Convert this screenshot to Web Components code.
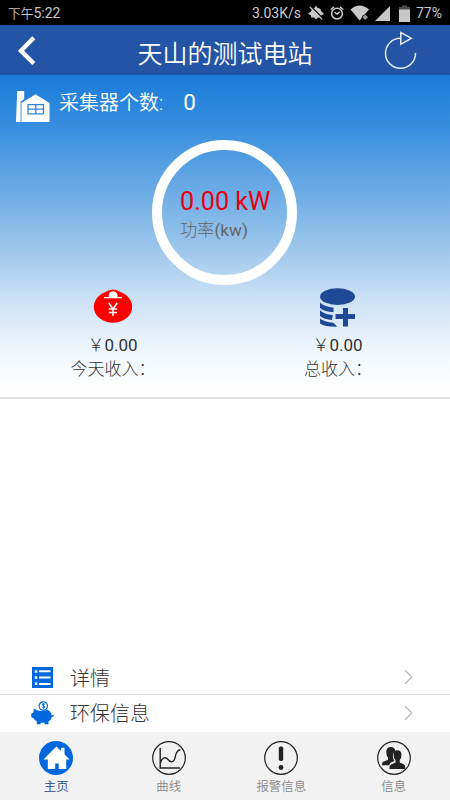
<!DOCTYPE html>
<html lang="zh-CN">
<head>
<meta charset="utf-8">
<title>天山的测试电站</title>
<style>
    body {
        margin: 0;
        width: 450px;
        height: 800px;
        overflow: hidden;
        background: #fff;
        font-family: Roboto, "Noto Sans CJK SC", sans-serif;
    }
</style>
</head>
<body>
<station-app>
    <status-bar slot="top" period="下午" time="5:22" speed="3.03K/s" battery="77%"></status-bar>
    <title-bar slot="top">天山的测试电站</title-bar>
    <station-summary slot="summary">
        <span slot="label">采集器个数:</span>
        <span slot="count">0</span>
        <power-ring value="0.00 kW" unit="(kw)">功率</power-ring>
        <income-item slot="income" icon="purse" value="0.00">今天收入：</income-item>
        <income-item slot="income" icon="coins" value="0.00">总收入：</income-item>
    </station-summary>
    <menu-row icon="list">详情</menu-row>
    <menu-row icon="piggy">环保信息</menu-row>
    <tab-bar slot="bottom">
        <tab-item icon="home" active>主页</tab-item>
        <tab-item icon="curve">曲线</tab-item>
        <tab-item icon="alarm">报警信息</tab-item>
        <tab-item icon="people">信息</tab-item>
    </tab-bar>
</station-app>

<script>
const ICONS = {
    mute: [16, 16, `
        <path fill="#c8c8c8" d="M4 4 6.500 2.800 8 .8l1.500 2L12.500 4l.5 2.300L15.500 8v1.200L13 10.800 12.500 12.500H9.800L8 14.500l-1.700-2H3.200L3 10.500.5 9V8L3 6.500z"/>
        <path stroke="#000" stroke-width="1.300" d="m3 1.500 12 12"/>
        <path stroke="#c8c8c8" stroke-width="1.300" d="m1.800 2 12.400 12.400"/>`],
    clock: [14, 14, `
        <g fill="none" stroke="#c8c8c8" stroke-width="1.6">
            <circle cx="7" cy="7.6" r="5.4"/>
            <path d="M.8 3.5 4 .9M13.2 3.5 10 .9M4.5 6 7 8l2.700-2.200"/>
        </g>`],
    wifi: [20, 16, `
        <path fill="#c8c8c8" d="M.5 4.6Q9.5-3.4 19 4.6l-4.3 5-2 1-1.6 3.1-1.4 1.8z"/>
        <path fill="#999" d="m15.2 9.5 2.8 2.8-2.8 2.8-2.8-2.8z"/>`],
    signal: [15, 15, `<path fill="#c8c8c8" d="M15 0v15H0z"/>`],
    battery: [11, 17, `
        <path fill="#4a4a4a" d="M3 .5h5V2h3v3H0V2h3z"/>
        <path fill="#c8c8c8" d="M0 4.5h11V17H0z"/>`],
    back: [18, 30, `<path fill="none" stroke="#fff" stroke-width="4.4" d="M15.8 1.7 3 14.8l12.8 12.7"/>`],
    refresh: [34, 40, `
        <g fill="none" stroke="#e4ecf8" stroke-width="1.5">
            <path d="M16.5 7.3A15 15 0 1 0 31.5 22"/>
            <path d="M16.8 1.5v11.8l10.5-6.1z"/>
        </g>`],
    factory: [34, 32, `
        <path fill="#fff" d="M1.2 0h7v8.2L4.6 10.5V31H0z"/>
        <path fill="#fff" d="M5.500 12 19.5 3.300 33.500 12v19h-28z"/>
        <path fill="none" stroke="#2c85d8" stroke-width="1.3" d="M12 13.6h15.5v9.2H12zM19.8 13.6v9.2M12 18.2h15.5"/>`],
    purse: [40, 36, `
        <ellipse cx="20" cy="18.8" rx="19.2" ry="16"/>
        <path d="M12 4.5Q20-1.500 28 4.500z"/>
        <path fill="#fff" d="M11 10.300V9h4.800a4.500 4.500 0 1 1 8.600 0H29v1.300z"/>
        <path fill="none" stroke="#fff" stroke-width="1.500" d="m15.800 15 4.200 6 4.200-6M20 21v7M15.800 21h8.400M15.800 24.400h8.400"/>`],
    coins: [36, 40, `
        <ellipse cx="17.5" cy="8.600" rx="17.500" ry="8.400"/>
        <path d="M0 14.500q4 4.200 13.500 5v4.700Q4.500 23.700 0 20zM0 22.300q4 4 12.800 4.700L12 32Q4 31.500 0 28zM0 30.500Q4 34 13.500 34.800l3.800 3.900Q5 39 0 35.500z"/>
        <path d="M23 20h5v6h7v5h-7v7.500h-5V31h-7.500v-5H23z"/>`],
    list: [21, 21, `
        <path d="M0 0h21v21H0z"/>
        <path fill="#fff" d="M2.800 3.300h2.500v2.500H2.800zM7 3.300h11.500v2H7zM2.800 9.300h2.500v2.500H2.800zM7 9.500h11.500v2H7zM2.800 15.500h2.500V18H2.800zM7 16h11.500v2H7z"/>`],
    piggy: [24, 24, `
        <circle cx="12.300" cy="5" r="4.200" fill="none" stroke="#0068dc" stroke-width="1.200"/>
        <path fill="none" stroke="#0068dc" d="M14 3.500c-1-1-3.300-.8-3 .4.300 1.200 3 .9 3 2.100 0 1.200-2.300 1.100-3.200.2M12.400 2.300v5.400"/>
        <path d="M2.500 7.500 6 9.200q6 2 10-.8 4 1.400 4.800 6l1.800-.7.300 1.200-2.200 1.300q-.7 3-3.200 4.400v2.600h-3.600l-.6-1.400H10l-.7 1.400H5.800v-3Q3 18.700 2.300 17L.6 16.600 0 13l2.200-1.200q.8-2 .3-4.300z"/>`],
    next: [9, 16, `<path fill="none" stroke="#bbbec1" stroke-width="1.400" d="m1 1.300 6.800 6.700L1 14.700"/>`],
    home: [34, 34, `
        <circle cx="17" cy="17" r="17"/>
        <path fill="#fff" d="M17.300 5.500 22 10V6.700h3.500v6.500l5 5.200h-3.300V28h-7.500v-5.500h-3.500V28H8.800v-9.600H4.500z"/>`],
    curve: [34, 34, `
        <circle cx="17" cy="17" r="16.300" fill="none" stroke="#222" stroke-width="1.200"/>
        <path fill="none" stroke="#222" stroke-width="1.400" d="M8.200 7v20h19.600M8.400 22c1.500-5 4.500-6.500 7-4 2 2.500 4 3.500 6 2s1.500-5 3-8 2.500-3.200 4-3.300"/>`],
    alarm: [34, 34, `
        <circle cx="17" cy="17" r="16.300" fill="none" stroke="#222" stroke-width="1.200"/>
        <rect x="14.800" y="5.500" width="4.400" height="14.500" rx="1.800"/>
        <circle cx="17" cy="26.500" r="2.400"/>`],
    people: [34, 34, `
        <circle cx="17" cy="17" r="16.300" fill="none" stroke="#222" stroke-width="1.200"/>
        <path d="M5 24.300v-1.800q.3-1.600 2.500-2.200l3.500-1.500v-2.300q-1.600-1.500-1.600-4.500C8.800 8.500 10.500 6 13.800 6c3 0 4.700 2 4.500 4.500q-2.800 1.500-2.500 4.500.2 3 1.700 5l-3.500 1.500q-1.500.8-1.700 2.800z"/>
        <path d="M12.500 28v-2.500q.3-1.800 2.500-2.500l3.500-1.400V19q-2-2-2-5 0-4.800 4-4.800t4 4.800q0 3-1.800 5v2.600l3.500 1.400q2 .8 2 2.500V28z"/>`]
};

class AppIcon extends HTMLElement {
    constructor() {
        super();
        this.attachShadow({ mode: 'open' });
    }

    connectedCallback() {
        const [width, height, shapes] = ICONS[this.getAttribute('name')];
        this.shadowRoot.innerHTML = `
            <style>
                :host {
                    display: block;
                    flex: none;
                }

                svg {
                    display: block;
                    fill: currentColor;
                }
            </style>
            <svg width="${width}" height="${height}" viewBox="0 0 ${width} ${height}">${shapes}</svg>
        `;
    }
}

class StationApp extends HTMLElement {
    constructor() {
        super();
        this.attachShadow({ mode: 'open' });
        this.shadowRoot.innerHTML = `
            <style>
                :host {
                    display: flex;
                    flex-direction: column;
                    height: 800px;
                }

                #space {
                    flex: 1;
                }
            </style>
            <slot name="top"></slot>
            <slot name="summary"></slot>
            <div id="space"></div>
            <slot></slot>
            <slot name="bottom"></slot>
        `;
    }
}

class StatusBar extends HTMLElement {
    constructor() {
        super();
        this.attachShadow({ mode: 'open' });
    }

    connectedCallback() {
        this.shadowRoot.innerHTML = `
            <style>
                :host {
                    display: flex;
                    align-items: center;
                    box-sizing: border-box;
                    height: 25px;
                    padding: 1px 8px 0;
                    background: #000;
                    color: #c8c8c8;
                    font-size: 14px;
                    line-height: 24px;
                }

                #time {
                    flex: 1;
                }

                #time span {
                    font-size: 12.7px;
                    font-weight: 350;
                }

                #time, #speed, #battery {
                    white-space: nowrap;
                }

                #icons {
                    display: flex;
                    align-items: center;
                    margin: 0 6px 0 7px;
                }

                #icons app-icon + app-icon { margin-left: 6px; }
                #icons app-icon[name="signal"] { margin-left: 5px; }
                #icons app-icon[name="battery"] { margin-left: 9px; }
            </style>
            <div id="time"><span>${this.getAttribute('period')}</span>${this.getAttribute('time')}</div>
            <span id="speed">${this.getAttribute('speed')}</span>
            <div id="icons">
                <app-icon name="mute"></app-icon>
                <app-icon name="clock"></app-icon>
                <app-icon name="wifi"></app-icon>
                <app-icon name="signal"></app-icon>
                <app-icon name="battery"></app-icon>
            </div>
            <span id="battery">${this.getAttribute('battery')}</span>
        `;
    }
}

class TitleBar extends HTMLElement {
    constructor() {
        super();
        this.attachShadow({ mode: 'open' });
        this.shadowRoot.innerHTML = `
            <style>
                :host {
                    display: grid;
                    grid-template-columns: 66px 1fr 66px;
                    align-items: center;
                    height: 50px;
                    background: #2454a5;
                    color: #fff;
                }

                app-icon[name="back"] {
                    margin: 1px 0 0 18px;
                }

                app-icon[name="refresh"] {
                    margin-top: 2px;
                }

                h1 {
                    margin: 10px 0 0;
                    text-align: center;
                    font-size: 25px;
                    font-weight: 350;
                    line-height: 40px;
                }
            </style>
            <app-icon name="back"></app-icon>
            <h1><slot></slot></h1>
            <app-icon name="refresh"></app-icon>
        `;
    }
}

class StationSummary extends HTMLElement {
    constructor() {
        super();
        this.attachShadow({ mode: 'open' });
        this.shadowRoot.innerHTML = `
            <style>
                :host {
                    display: flex;
                    flex-direction: column;
                    box-sizing: border-box;
                    height: 324px;
                    border-bottom: 2px solid #e0e0e0;
                    background: linear-gradient(#1a7bda, #398fdf 17%, #94c2ea 51%, #cde1f5 70%, #f0f7fc 86%, #fff 98%) padding-box;
                }

                header {
                    display: flex;
                    align-items: center;
                    box-sizing: border-box;
                    height: 65px;
                    padding: 0 0 2px 16px;
                    color: #fff;
                    font-size: 20px;
                    line-height: 30px;
                }

                header app-icon {
                    margin: 0 9px 0 0;
                }

                #label {
                    margin-bottom: 7px;
                    font-weight: 350;
                }

                #count {
                    margin: 0 0 10px 20px;
                    font-size: 22.5px;
                }

                #income {
                    display: grid;
                    grid-template-columns: 1fr 1fr;
                }
            </style>
            <header>
                <app-icon name="factory"></app-icon>
                <div id="label"><slot name="label"></slot></div>
                <div id="count"><slot name="count"></slot></div>
            </header>
            <slot></slot>
            <div id="income"><slot name="income"></slot></div>
        `;
    }
}

class PowerRing extends HTMLElement {
    constructor() {
        super();
        this.attachShadow({ mode: 'open' });
    }

    connectedCallback() {
        this.shadowRoot.innerHTML = `
            <style>
                :host {
                    display: flex;
                    flex-direction: column;
                    align-self: center;
                    box-sizing: border-box;
                    width: 145px;
                    height: 145px;
                    margin-right: 1px;
                    padding: 37px 0 0 18px;
                    border: 10px solid #fff;
                    border-radius: 50%;
                    white-space: nowrap;
                }

                #value {
                    color: #e60012;
                    font-size: 25.2px;
                    line-height: 30px;
                }

                #label {
                    color: #666;
                    font-size: 17.2px;
                    line-height: 26px;
                }

                #label span {
                    font-weight: 300;
                }
            </style>
            <div id="value">${this.getAttribute('value')}</div>
            <div id="label"><span><slot></slot></span>${this.getAttribute('unit')}</div>
        `;
    }
}

class IncomeItem extends HTMLElement {
    constructor() {
        super();
        this.attachShadow({ mode: 'open' });
    }

    connectedCallback() {
        this.shadowRoot.innerHTML = `
            <style>
                :host {
                    display: flex;
                    flex-direction: column;
                    align-items: center;
                    padding-top: 3px;
                    color: #333;
                    font-size: 17px;
                    line-height: 24px;
                }

                app-icon {
                    height: 45px;
                    color: #f00;
                }

                app-icon[name="coins"] {
                    color: #1f4996;
                }

                #value span, #label {
                    font-weight: 300;
                }

                #label {
                    padding-left: 1px;
                }
            </style>
            <app-icon name="${this.getAttribute('icon')}"></app-icon>
            <div id="value"><span>￥</span>${this.getAttribute('value')}</div>
            <div id="label"><slot></slot></div>
        `;
    }
}

class MenuRow extends HTMLElement {
    constructor() {
        super();
        this.attachShadow({ mode: 'open' });
    }

    connectedCallback() {
        this.shadowRoot.innerHTML = `
            <style>
                :host {
                    display: flex;
                    align-items: center;
                    box-sizing: border-box;
                    height: 35px;
                    padding: 0 37px 0 31px;
                    border-bottom: 1px solid #dcdfe0;
                    color: #333;
                    font-size: 20px;
                    font-weight: 300;
                    line-height: 30px;
                }

                :host(:last-of-type) {
                    height: 37px;
                    padding-bottom: 2px;
                    border: 0;
                }

                #icon {
                    display: flex;
                    justify-content: center;
                    width: 23px;
                    margin-right: 16px;
                    color: #0068dc;
                }

                #text {
                    flex: 1;
                    padding-top: 3px;
                }

                app-icon[name="piggy"] {
                    margin-top: 1px;
                }
            </style>
            <div id="icon"><app-icon name="${this.getAttribute('icon')}"></app-icon></div>
            <div id="text"><slot></slot></div>
            <app-icon name="next"></app-icon>
        `;
    }
}

class TabBar extends HTMLElement {
    constructor() {
        super();
        this.attachShadow({ mode: 'open' });
        this.shadowRoot.innerHTML = `
            <style>
                :host {
                    display: grid;
                    grid-template-columns: repeat(4, 1fr);
                    height: 68px;
                    background: #f2f2f2;
                }
            </style>
            <slot></slot>
        `;
    }
}

class TabItem extends HTMLElement {
    constructor() {
        super();
        this.attachShadow({ mode: 'open' });
    }

    connectedCallback() {
        this.shadowRoot.innerHTML = `
            <style>
                :host {
                    display: flex;
                    flex-direction: column;
                    align-items: center;
                    padding-top: 9px;
                    color: #888;
                    font-size: 12.4px;
                    font-weight: 350;
                    line-height: 20px;
                }

                :host([active]) {
                    color: #1c4290;
                }

                app-icon {
                    margin-bottom: 2px;
                    color: #222;
                }

                :host([active]) app-icon {
                    color: #0068dc;
                }
            </style>
            <app-icon name="${this.getAttribute('icon')}"></app-icon>
            <div><slot></slot></div>
        `;
    }
}

customElements.define('app-icon', AppIcon)
customElements.define('station-app', StationApp)
customElements.define('status-bar', StatusBar)
customElements.define('title-bar', TitleBar)
customElements.define('station-summary', StationSummary)
customElements.define('power-ring', PowerRing)
customElements.define('income-item', IncomeItem)
customElements.define('menu-row', MenuRow)
customElements.define('tab-bar', TabBar)
customElements.define('tab-item', TabItem)
</script>
</body>
</html>
